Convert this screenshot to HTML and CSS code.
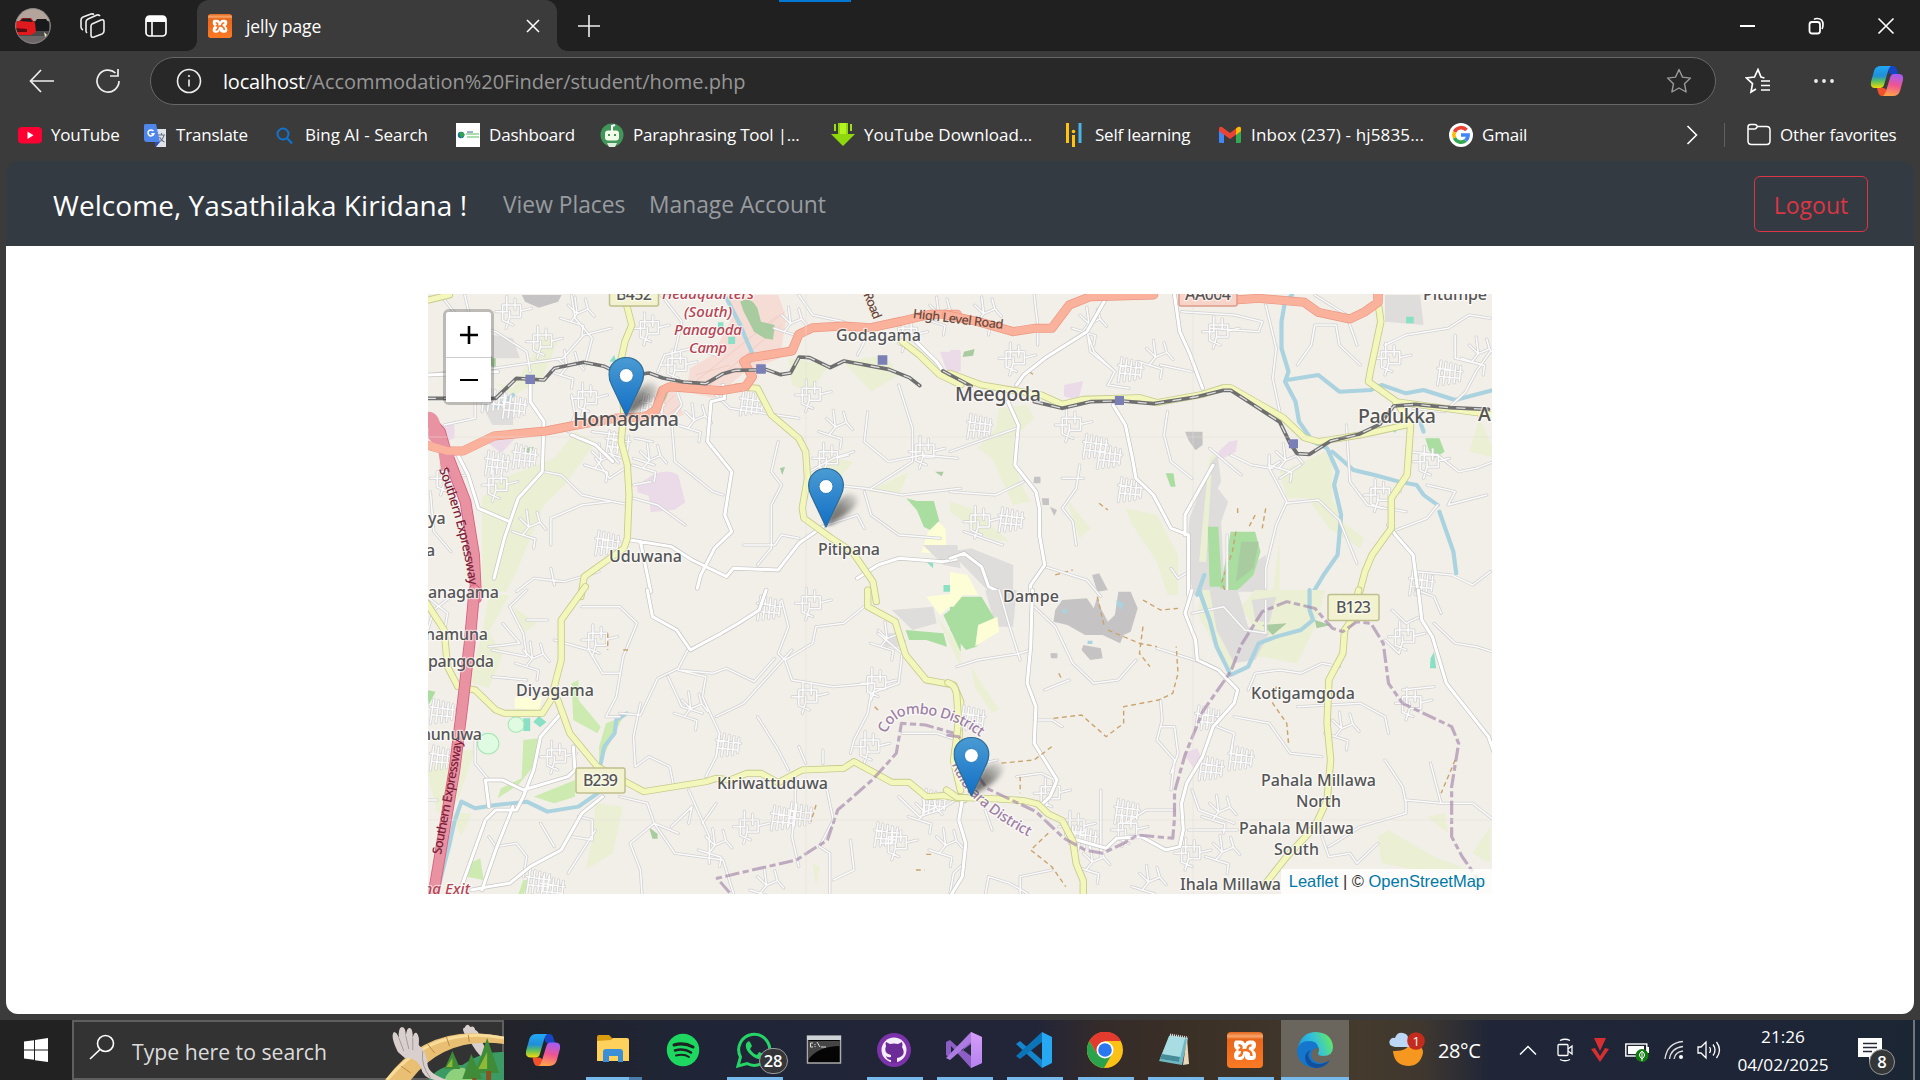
FILE: index.html
```html
<!DOCTYPE html>
<html lang="en">
<head>
<meta charset="utf-8">
<title>jelly page</title>
<link rel="stylesheet" href="styles.css">
</head>
<body>
<svg class="defs" width="0" height="0" aria-hidden="true">
  <defs>
    <linearGradient id="cpA" x1="0" y1="0" x2="0" y2="1"><stop offset="0" stop-color="#22a8f5"/><stop offset=".45" stop-color="#1f8fd8"/><stop offset=".7" stop-color="#5fc05a"/><stop offset="1" stop-color="#f5d90a"/></linearGradient>
    <linearGradient id="cpB" x1=".6" y1="0" x2=".4" y2="1"><stop offset="0" stop-color="#a45cf5"/><stop offset=".5" stop-color="#ef5591"/><stop offset="1" stop-color="#ffa24a"/></linearGradient>
    <linearGradient id="xo" x1="0" y1="0" x2="0" y2="1"><stop offset="0" stop-color="#e2651a"/><stop offset=".12" stop-color="#f9a56a"/><stop offset=".2" stop-color="#e8661a"/><stop offset="1" stop-color="#fb7a24"/></linearGradient>
    <linearGradient id="pinFill" x1="0" y1="0" x2="0" y2="1"><stop offset="0" stop-color="#4a9bd3"/><stop offset="1" stop-color="#126fc6"/></linearGradient>
    <linearGradient id="shade" x1="0" y1="1" x2="1" y2="0"><stop offset="0" stop-opacity=".6"/><stop offset=".5" stop-opacity=".45"/><stop offset="1" stop-opacity=".02"/></linearGradient>
    <linearGradient id="edgeA" x1="0" y1=".6" x2="1" y2=".3"><stop offset="0" stop-color="#1b9de2"/><stop offset=".5" stop-color="#35c1d9"/><stop offset="1" stop-color="#66eb5e"/></linearGradient>
    <linearGradient id="vsA" x1="0" y1="0" x2="0" y2="1"><stop offset="0" stop-color="#d59df8"/><stop offset="1" stop-color="#b583f0"/></linearGradient>
    <symbol id="copilot" viewBox="0 0 34 32">
      <path d="M18 1h5q3 0 4 4l1.500 5h-5q-4 0-5-4z" fill="#1746c4"/>
      <path d="M16 31h-4q-3 0-4-4l-1-4h6q3 0 3.500 3z" fill="#f0502c"/>
      <path d="M11 1h10q-2 1-3 5l-4 14q-1 3-4 3H5q-5 0-4-6L4 6q1.500-5 7-5z" fill="url(#cpA)"/>
      <path d="M23 31H13q2-1 3-5l4-13q1-4 4-4h5q5 0 4 6l-3 11q-1.500 5-7 5z" fill="url(#cpB)"/>
    </symbol>
    <symbol id="xampp" viewBox="0 0 36 36">
      <rect width="36" height="36" rx="4" fill="url(#xo)"/>
      <path d="M9 8.500h5q2.500 0 4 3 1.500-3 4-3h3q4 0 4 4.500 0 3.500-3 5 3 1.500 3 5.500 0 4.500-4 4.500h-3q-4.500 0-4.500-5 0 5-4.500 5h-2q-4 0-4-4.500 0-4 3-5.500-3-1.500-3-5 0-4.500 2-4.500z" fill="#fff"/>
      <path d="M11.500 13.500q3-.500 3 2t-3 2.500M24.500 13.500q-4-.500-4 4M11.500 24q3.500 0 3.500-4 0-2 3-2t4 1q2.500 1 2.500 5" fill="none" stroke="#f07020" stroke-width="2.400"/>
    </symbol>
    <symbol id="pin" viewBox="0 0 62 60">
      <path d="M18 59Q24 34 38 27q9-3 12 4 0 12-32 28z" fill="url(#shade)" filter="url(#soft)"/>
      <path d="M18 1C8 1 .6 8.500 .6 18c0 4 1.200 7.500 3 11l14.400 30.500 14.400-30.500c1.800-3.500 3-7 3-11C35.400 8.500 28 1 18 1z" fill="url(#pinFill)" stroke="#2e6c97" stroke-width="1.200"/>
      <circle cx="18" cy="19" r="7" fill="#fff" stroke="#2e7db8" stroke-width="1"/>
    </symbol>
    <filter id="soft" x="-20%" y="-20%" width="140%" height="140%"><feGaussianBlur stdDeviation="2.500"/></filter>
    <path id="blkA" d="M0 0L70 10M10-22L0 50M24-18L16 48M38-14L32 46M52-10L47 44M66-6L62 38M4 24L60 30"/>
    <path id="blkB" d="M0 0H52V36H20V18M0 0V46L30 60M12-26V20M36-18V14M52 18L84 10M20 36L10 70M-20 20H14"/>
    <path id="blkC" d="M0 0L26 26L8 50L44 62M26 26L58 12L76 34M58 12L50-18M8 50L-22 40M44 62L40 90M26 26L20-24"/>
  </defs>
</svg>

<div class="browser">
  <div class="tabstrip">
    <div class="tabtools">
      <svg class="avatar" viewBox="0 0 36 36"><defs><clipPath id="av"><circle cx="18" cy="18" r="17.500"/></clipPath></defs><g clip-path="url(#av)"><rect width="36" height="36" fill="#4a4a4a"/><rect width="36" height="13" fill="#b3a49c"/><path d="M0 28h36v8H0z" fill="#6b6766"/><path d="M19 15l3-4h9l3 4v8H19z" fill="#17191c"/><path d="M0 14l4-1 3-3h9l4 5 1 9-5 3H0z" fill="#df1a1e"/><path d="M5 13l3-2.500h7l3 3.500z" fill="#1d1e22"/><path d="M0 20l12 1v3H0z" fill="#5a0c10"/><path d="M29 24l3 3-2 2z" fill="#eec"/></g><circle cx="18" cy="18" r="17.400" fill="none" stroke="#8b8785"/></svg>
      <svg class="i26" viewBox="0 0 26 26"><g fill="none" stroke="#eee" stroke-width="1.600" stroke-linejoin="round"><path d="M12 11l9-4q3-1 3 2v9q0 2-2 3l-8 3q-3 1-3-2v-9q0-1 1-2zM7 20q-1-1-1-2V9q0-2 2-3l9-4q2-.6 3 1M3 17q-2-1-2-3V7q0-2 2-3l8-3q2-.500 3 .6"/></g></svg>
      <svg class="i24" viewBox="0 0 24 24"><rect x="2" y="2" width="20" height="20" rx="3.500" fill="none" stroke="#fff" stroke-width="1.700"/><path d="M2 8V5q0-3 3-3h14q3 0 3 3v3z" fill="#fff"/><path d="M8 8v14" stroke="#fff" stroke-width="1.600"/></svg>
    </div>
    <div class="tab">
      <svg class="i24" viewBox="0 0 36 36"><use href="#xampp"/></svg>
      <span class="tabtitle">jelly page</span>
      <svg class="i14" viewBox="0 0 14 14"><path d="M1 1l12 12M13 1L1 13" stroke="#fff" stroke-width="1.500"/></svg>
    </div>
    <svg class="plus" viewBox="0 0 22 22"><path d="M11 0v22M0 11h22" stroke="#eee" stroke-width="1.600"/></svg>
    <div class="progress"></div>
    <div class="winbtns">
      <svg viewBox="0 0 18 18"><path d="M1 9h15" stroke="#fff" stroke-width="2"/></svg>
      <svg viewBox="0 0 18 18"><rect x="1.500" y="5" width="10.500" height="11.500" rx="2.500" fill="none" stroke="#fff" stroke-width="1.800"/><path d="M6 2.500q1-1 3-1 6 0 6 6 0 3-1 4.500" fill="none" stroke="#fff" stroke-width="1.700"/></svg>
      <svg viewBox="0 0 18 18"><path d="M1.500 1.500l15 15M16.500 1.500l-15 15" stroke="#fff" stroke-width="1.600"/></svg>
    </div>
  </div>

  <div class="toolbar">
    <svg class="back" viewBox="0 0 26 24"><path d="M25 12H1.500M12 1L1.500 12 12 23" fill="none" stroke="#eee" stroke-width="1.700"/></svg>
    <svg class="reload" viewBox="0 0 26 26"><path d="M24 13a11 11 0 1 1-3.500-8M23 1v7h-8" fill="none" stroke="#eee" stroke-width="1.700"/></svg>
    <div class="address">
      <svg class="i26" viewBox="0 0 26 26"><circle cx="13" cy="13" r="11.500" fill="none" stroke="#eee" stroke-width="1.600"/><path d="M13 11.500v7" stroke="#eee" stroke-width="1.600"/><circle cx="13" cy="8" r="1.100" fill="#eee"/></svg>
      <span class="url"><b>localhost</b>/Accommodation%20Finder/student/home.php</span>
      <svg class="i26" viewBox="0 0 26 26"><path d="M13 1.500l3.500 7.600 8 1-6 5.600 1.600 8.300L13 20l-7.100 4 1.600-8.300-6-5.600 8-1z" fill="none" stroke="#9a9a9a" stroke-width="1.400" stroke-linejoin="round"/></svg>
    </div>
    <svg class="favs" viewBox="0 0 26 26"><path d="M19.500 10L16 9 13 1.500 9.500 9l-8 1 6 5.600L6 24l5-3M16 13h9M16 17.500h9M16 22h9" fill="none" stroke="#fff" stroke-width="1.700"/></svg>
    <svg class="dots" viewBox="0 0 22 6"><g fill="#eee"><circle cx="3" cy="3" r="1.900"/><circle cx="11" cy="3" r="1.900"/><circle cx="19" cy="3" r="1.900"/></g></svg>
    <svg class="cop" viewBox="0 0 34 32"><use href="#copilot"/></svg>
  </div>

  <div class="bookmarks">
    <div class="bm"><svg viewBox="0 0 24 24"><rect y="4" width="24" height="16.500" rx="4" fill="#ff0033"/><path d="M9.500 8.500v7.500l6-3.700z" fill="#fff"/></svg><span>YouTube</span></div>
    <div class="bm"><svg viewBox="0 0 24 24"><path d="M12 6h11v18H13z" fill="#e0e3e8"/><path d="M2 1h11l4 18H4q-3 0-3-3V2z" fill="#4f86ec"/><path d="M12 19h5l-4 5z" fill="#2a4fbf"/><path d="M10.500 8.200a3 3 0 1 0 .4 2.500H8.300" fill="none" stroke="#fff" stroke-width="1.500"/><path d="M15 12h7M18.500 10v2M21 12q-1 5-5 7M16.500 14q2 4 5 5" fill="none" stroke="#6b7784" stroke-width="1.200"/></svg><span>Translate</span></div>
    <div class="bm wide"><svg viewBox="0 0 24 24"><circle cx="11" cy="11" r="5.500" fill="none" stroke="#1273cf" stroke-width="2"/><path d="M15 15l5 5.500" stroke="#1273cf" stroke-width="2.200"/></svg><span>Bing AI - Search</span></div>
    <div class="bm"><svg viewBox="0 0 24 24"><rect width="24" height="24" fill="#fff"/><circle cx="5" cy="12" r="3.200" fill="#1870a8"/><path d="M3 10q4-3 6 2l-4 3z" fill="#35a448"/><path d="M10 11h13M11 14h12" stroke="#8ed495" stroke-width="1.500"/><path d="M11 9h6" stroke="#46629a"/></svg><span>Dashboard</span></div>
    <div class="bm"><svg viewBox="0 0 24 24"><circle cx="12" cy="12" r="11.500" fill="#41965a"/><path d="M12 8V3l3-1" stroke="#fff" stroke-width="2" fill="none"/><rect x="5" y="7.500" width="14" height="10" rx="3" fill="#f3fbe9"/><path d="M7 20h10l-2 4H9z" fill="#dcebdc"/><path d="M8 11h2v2H8zM14 11h2v2h-2z" fill="#41965a"/></svg><span>Paraphrasing Tool |...</span></div>
    <div class="bm wide"><svg viewBox="0 0 24 24"><path d="M7 0h10v11h7L12 23 0 11h7z" fill="#8fd80e"/><path d="M4 1v7M20 1v7" stroke="#9be01a" stroke-width="2"/><path d="M9 0h6v11H9z" fill="#b4f222"/></svg><span>YouTube Download...</span></div>
    <div class="bm"><svg viewBox="0 0 24 24"><path d="M5.500 0v20M11.500 12v12" stroke="#ffc20e" stroke-width="3"/><circle cx="11.500" cy="8.500" r="1.800" fill="#ffc20e"/><path d="M18 0v20" stroke="#4bb5e8" stroke-width="3"/></svg><span>Self learning</span></div>
    <div class="bm wider"><svg viewBox="0 0 24 24"><path d="M1 6h5v14H2q-1 0-1-1z" fill="#4285f4"/><path d="M18 6h5v13q0 1-1 1h-4z" fill="#34a853"/><path d="M1 6q0-3 3-2l8 6 8-6q3-1 3 2v2l-11 8L1 8z" fill="#ea4335"/><path d="M18 5.500l2-1.500q3-1 3 2v2l-5 4z" fill="#fbbc04"/></svg><span>Inbox (237) - hj5835...</span></div>
    <div class="bm"><svg viewBox="0 0 24 24"><circle cx="12" cy="12" r="12" fill="#fff"/><g fill="none" stroke-width="3.600"><path d="M17.500 7A7.200 7.200 0 0 0 5.500 9" stroke="#ea4335"/><path d="M5.500 9a7 7 0 0 0 0 6" stroke="#fbbc05"/><path d="M5.500 15a7.200 7.200 0 0 0 11 2.500" stroke="#34a853"/><path d="M16.500 17.500q2.500-2 2.600-5.500H12" stroke="#4285f4"/></g></svg><span>Gmail</span></div>
    <svg class="more" viewBox="0 0 12 20"><path d="M1.500 1l9 9-9 9" fill="none" stroke="#fff" stroke-width="1.600"/></svg>
    <div class="bmsep"></div>
    <div class="bm"><svg viewBox="0 0 24 24"><path d="M1 6V4q0-2.500 2.500-2.500H8q1.500 0 2.500 2h9Q23 3.500 23 7v11q0 3.500-3.500 3.500h-15Q1 21.500 1 18V6h7q1 0 2.500-2.500" fill="none" stroke="#fff" stroke-width="1.500"/></svg><span>Other favorites</span></div>
  </div>

  <div class="page">
    <nav class="navbar">
      <span class="brand">Welcome, Yasathilaka Kiridana !</span>
      <a class="navlink vp">View Places</a>
      <a class="navlink ma">Manage Account</a>
      <button class="logout">Logout</button>
    </nav>
    <main class="mapwrap">
      <div class="map">
      <svg class="mapsvg" width="1064" height="600" viewBox="0 0 1064 600">
        <!-- north-west -->
        <g transform="matrix(.3444 0 0 .3333 -8 -9)">
          <g class="farm"><path d="M180 640l60-60 150-60 60-80 60 30-90 130-60 60-80 200-30 60h-70zM20 30h60l-40 20zM210 290l60 20 90-160 40 20-50 120-80 40zM1200 520l60 10-90 100-40-10zM1300 620l120-60-30 70zM1070 220l120 20-60 80-50-20zM1230 230l120-20 40 60-80 50z"/></g>
          <path class="lilac" d="M630 600l50-32q40-18 70 2l20 82-30 22-70 8-6-50-32-10zM186 465l90-5-40 45zM60 420h40v40l-30 10zM1510 200h60v60h-40z"/>
          <path class="mil" d="M850 210l60-120-20-60h150l24 70-20 120-100 40-90 80-80-20 10-70zM670 350l66-40 30 80-60 20z"/>
          <path class="milh" d="M800 290l240-200M830 310l220-190M900 240l-100 30M1000 130l60-50M690 380l50-50M710 400l50-45"/>
          <path class="park" d="M930 50q30-20 50 20l10 40 40 10-5 44-25-4-30-20-30-60z"/><path class="grass" d="M1412 640l30 8 50 0 16 60-25 28-20-10-20-50z"/><path class="sport" d="M1475 740l30-30 20 20 6 80-75-8z"/>
          <path class="grn" d="M200 210l20 10v35l-15-5zM230 170h20v12h-20zM300 490l30-5-5 16-20 5zM1045 550l15-5-8 25zM1495 560l25 0-5 14zM700 320l20 5-10 25z"/>
          <path class="teal" d="M550 230l14-20 6 20zM895 155h20v22h-20zM865 112h16v22h-16zM1470 830h20v20zM1520 900h40v20h-40z"/>
          <path class="gray" d="M210 150l60 10 20 60-80 0zM1460 780h100l10 70-50-10zM180 360h90v60h-60z"/><path class="quarry" d="M296 30h115l-10 20-56 18-40-18z"/>
          <path class="river" d="M890 40l40 80 20 50 15 35M270 330l-45 35"/>
          <g class="sc"><g id="b1" class="none">
            <use href="#blkA" x="180" y="330"/><use href="#blkA" x="240" y="350"/><use href="#blkB" x="330" y="150"/><use href="#blkC" x="400" y="220"/><use href="#blkB" x="200" y="580"/><use href="#blkA" x="190" y="520"/><use href="#blkA" x="270" y="500"/><use href="#blkB" x="240" y="60"/><use href="#blkC" x="430" y="60"/><use href="#blkB" x="460" y="320"/><use href="#blkC" x="500" y="500"/><use href="#blkA" x="510" y="760"/><use href="#blkC" x="640" y="500"/><use href="#blkB" x="640" y="110"/><use href="#blkA" x="930" y="340"/><use href="#blkC" x="1050" y="90"/><use href="#blkB" x="1110" y="310"/><use href="#blkB" x="1160" y="500"/><use href="#blkC" x="1480" y="60"/><use href="#blkB" x="1440" y="480"/><use href="#blkB" x="720" y="220"/><use href="#blkC" x="290" y="700"/><use href="#blkB" x="50" y="560"/><use href="#blkC" x="1180" y="400"/><use href="#blkA" x="640" y="350"/><use href="#blkC" x="770" y="380"/><use href="#blkB" x="1390" y="130"/><use href="#blkA" x="540" y="460"/>
            <path d="M25 270l60-10 130-10 200-30 60-70 80-20M60 30l60 80 100 30 90 60 10 60M130 30l20 90-30 70 90 60M440 30l10 70 50 60-20 80M440 330l10 60-20 50M740 300l20 60-30 40 10 130 50 40 60 50 30 10M1100 30l40 60 90 20 60 60-20 40M360 560l50 10 60 60 40 10 100 20M610 540l-60 40-40-60M620 640l70 20 80 60M860 330l40 40 200 30M1040 470l-20 90 30 40-30 60 0 130-40 50M1200 600l90 10 110 20 170-20M1300 380l-10 90 70 60 100-20 100 10M1390 300l40 130 0 100-120 80M1290 620l20 70 80 60 120 10M1180 720l90-30 20 40M380 780v-80l90-40 80-10M280 920l50-40 90 10 100-30M390 900l-10-50M690 260l20-50 80-20 70 20M940 780l90 0 20-30 50 10M1130 560l70-40 60-20M700 30l60 80-20 90M500 440l80 10M520 400l60 10M530 500l60 20M620 520l60 20M625 460l50 10M620 600l50-10M90 330l70 10 0 60-90 20M30 620l10 120 50 60"/></g></g>
          <use href="#b1" class="sf"/>
          <g class="tc"><path id="t1" d="M25 270l200-10M320 300l0 50 40 60-5 150-70 80-40 120-30 120M110 510l30 60 30 100 90 40M880 300l5 40-40 10-10 120 70 90-20 130 20 50-50 50-40 80-10 40M440 450l70 30 50 50M610 765l120 20 60 40 100 50 20-25 130 5 60-80 70-50M640 770l30 150M1570 820l-50 10-130-10-60 20-60 40M1440 170l60 60 20 30"/></g><use href="#t1" class="tf"/>
          <g class="yc"><path id="y1" d="M600 60l15 60-20 50-15 70 12 140-8 90 18 70 5 90-5 130-10 30-115 85-10 60M920 305l60 5 40 80 80 70 20 40 5 80-15 90 5 30 80 60 60 40 60 90 10 60M1400 170l50 40 60 60 60 30M25 45l60-15"/></g><use href="#y1" class="yf"/>
          <g class="oc"><path id="o1" d="M20 480l60 18h45l90-45 150-15 90-18 110-20 90-5 30-20 20-60 20-10 150 12 70-12 20-30-25-45 20-12 120-20 20-50 40-20 90-5 80 5 90-20 80-20 80 0"/></g><use href="#o1" class="of"/>
          <path class="mc" d="M24 400l34 40 14 50 60 160 25 160 6 130"/>
          <path class="mf" d="M24 400l34 40 14 50 60 160 25 160 6 130"/>
          <path d="M24 380q34 0 38 60l40 70-40 50-10-70-28-30z" fill="#e892a2"/>
          <path class="of" d="M20 480l60 18h45l90-45"/>
          <g class="rail"><path id="r1" d="M20 340h200l60-60 80 5 30-35 85-18 60 12 60 30 70-10 40 15 60 12 65 5 50-30 36-10 90-2 40 15 30-5 25-48 30 2 60 30 40-20 130 25 60 25 30 24"/></g><use href="#r1" class="raild"/>
          <path class="stn" d="M306 269h28v28h-28zM976 238h28v28h-28zM1329 211h28v28h-28z"/>
        </g>
        <!-- north-east -->
        <g transform="matrix(.3508 0 0 .3333 522 -9)">
          <g class="farm"><path d="M140 370l80-10 20 40-60 60 20 130 30 60-50 10-60-140-40-30 50-60zM940 560l130-60 20 30 0 110 30 70 60 50-10 30-90-60-60-90-60 0zM0 650l60 20 110 100-60-10-110-80zM500 670l90 20 60 120v120h-30l-30-100-70-110zM740 520l20-20-10 170-30 160-20 0zM1480 500l30-100 50 120zM330 640l70 90-30 30zM940 760v160h-20z"/></g>
          <path class="gray" d="M745 530l18-20 10 80-10 20 30 40-20 60 10 220-90 0-20-130 10-100zM0 800l60-10 120 50 0 90h-60zM1240 30h100l10 90-110-10zM870 830l30-20v110h-80z"/>
          <path class="farm" d="M735 560l10 10-15 260-20 0z"/>
          <path class="quarry" d="M670 440l50 0v40l-20 16-20-30zM240 575l18 0v20h-20zM262 640l20 0 0 20h-18zM405 870l20-5 25 50-30 5zM285 665l20 10-8 18z"/>
          <path class="lilac" d="M325 300l55-12-15 60-40-15zM765 500l30-30 25-5-5 35-45 25zM0 195l30 0-10 50-20-10z"/>
          <path class="grass" d="M735 725l30 0 10 180-35 0zM800 740l70 0 15 60-20 70-50 50-45-10 15-80zM615 565h22l6 40-14 0zM1355 460l40 0 15 40-30 20-15-25z"/><path class="park" d="M830 770l50 0-15 80-50 40z"/>
          <path class="sport" d="M0 860l50 10 30 60H0z"/><path class="grn" d="M40 200l30-8-4 20-30 4z"/><path class="teal" d="M1300 95h22v20h-22zM1240 425l35 0-5 18z"/>
          <path class="track" d="M815 740l-10 60-30 90 10 30M870 690l-20 40M425 655l25 20M300 870l50-15M225 260l15 10M900 670l-10 60M820 670v20"/>
          <path class="river" d="M975 30l-20 20-10 60v80l20 70-10 30 30 60 10 60 40 60 40 20 30 70-10 40 20 90-10 120-40 60-40 70v60M960 285l90-15 60 50 90-5 30-15 70 25 50-10 90 30 110-30M1090 500l60 55 60 15 70 20 50 10 20 30 40 30M1395 680l20 60 20 60 8 65M725 870l-20 60M1330 380l20 60"/>
          <g class="sc"><g id="b2" class="none">
            <use href="#blkA" x="480" y="240"/><use href="#blkC" x="560" y="190"/><use href="#blkB" x="740" y="120"/><use href="#blkB" x="320" y="400"/><use href="#blkA" x="380" y="470"/><use href="#blkA" x="420" y="500"/><use href="#blkC" x="70" y="60"/><use href="#blkB" x="160" y="200"/><use href="#blkA" x="480" y="600"/><use href="#blkA" x="140" y="690"/><use href="#blkB" x="60" y="690"/><use href="#blkB" x="1230" y="200"/><use href="#blkA" x="1390" y="250"/><use href="#blkB" x="1340" y="510"/><use href="#blkC" x="1480" y="180"/><use href="#blkB" x="1200" y="610"/><use href="#blkA" x="1310" y="880"/><use href="#blkC" x="930" y="500"/><use href="#blkC" x="370" y="90"/><use href="#blkA" x="50" y="410"/>
            <path d="M240 30l10 90 0 60M390 140l20 60 60 60-20 40 60 10M660 80l150 10 80 20-10 30-140-10M600 240l90 20M620 380l-10 70 20 80 60 50M800 510l60 30 60 10M910 550l50 100-30 70-30 130v60M910 510v40l30-20M990 240l40-60 10-60 60 0 10 60 60 60M900 60l30 130-10 90 20 100M1040 30l90 60 30 90M960 655l90-10 60 60 50 130M1130 420l10 170 50 70 50 10 60 10M1240 180l60-30 120-20 60-40 60 10M1320 370l90 10 60-60 30-60 40-60M1310 500l80 10 60 50 50-10 50-20M1360 600l80 20-20 40 110-30M1260 740l100-40 30-40M1330 860l100 10 60 30 50-40M0 500l80-30 110-40M0 620l130 10 80-40M40 740l110 40M270 845l60 20 60 20 40 50M360 780l-10-70-30-40 40-60 10-70M320 580h60M790 750v170M630 850l20 30 30-20M740 490l90 80M1000 540l-60 40M390 130l10 70 70 60M1440 150v70l80 20"/></g></g>
          <use href="#b2" class="sf"/>
          <g class="tc"><path id="t2" d="M450 30l-60 110-120 80-60 50-20 30M165 350l30 70-10 120 60 80 10 50 0 80 15 90-40 60v20M465 360l35 60 20 100 10 60 50 50 50 100 50 20 0 180M640 30l15 110 30 70 35 100M750 540l-80 150 0 60M0 820l40-15 50 40 20 60 40 20M1250 720l20 30 50 60 15 120"/></g><use href="#t2" class="tf"/>
          <g class="yc"><path id="y2" d="M0 265l90 35 170 30 60 28 60-15 160-5 50 15 130-25 60-20h20l150 90 60 60 40 12 120-20 130-30M1220 50l8 60-30 150-5 30 80 60 40 70-10 150-45 70 0 90-55 80-20 50-15 60M1270 350l280 40"/></g><use href="#y2" class="yf"/>
          <g class="oc"><path id="o2" d="M-10 90l90 20 100 30 60-10 50 0 50-70 60-25 180-5M810 45l70-5 130 12 40 30 90 20 40-20 40-30 0-30"/></g><use href="#o2" class="of"/>
          <g class="rail"><path id="r2" d="M-20 258l80 45M240 350l80 20 80-20 90-2 90 8 120-20 80-20h20l60 40 80 55 30 65 20 30 35 2 60-40 80-20 60-30 40-55 60-5 100 10 110 5"/></g><use href="#r2" class="raild"/>
          <path class="stn" d="M470 333h26v27h-26zM966 463h26v27h-26z"/>
        </g>
        <!-- south-west -->
        <g transform="matrix(.3444 0 0 .3333 -8 296)">
          <g class="farm"><path d="M200 15h60l-60 110 40 70-40 100-60-20 40-140zM270 50l70 50-40 30zM510 640l80 10-30 140-80 50 20-90zM20 540l90-60 50 0-50 150-60 40zM90 670h60l-30 70zM1140 820l20 10-10 60zM1500 80l70 90 0 60z"/></g>
          <path class="grassl" d="M440 280l20-10 0 60 65 80-10 20-70-40zM300 450l45-5-20 90-40 50-60 40 10-30 60-30zM330 620l120-50 0 50-60 20zM540 400l50-20-40 80-30 70 0-60zM145 820l30-15 10 65-50-10zM300 870l20 0-20 45h-15z"/>
          <path class="sport" d="M275 322l80 0-10 38-70-5zM1470 20l90-10v20l-50 45z"/><path class="grass" d="M1520 75l50-40v150zM1410 120l110 10 10 40-60-20-50 0zM20 300l25 5-20 40z"/>
          <path class="grn" d="M665 712l25 20v14h-15z"/><path class="teal" d="M300 385h20v38h-20zM345 378l22 18-18 16-20-16z"/>
          <path class="gray" d="M1370 60l120-10 10 50-70 20M1350 130l40 0 10 40-50 0z"/>
          <circle cx="279" cy="404" r="23" class="pond"/><circle cx="198" cy="461" r="31" class="pond"/>
          <path class="river" d="M600 370l-30 20-5 40-30 40-10 50-25 40M530 600l-70 50-90 15-60-30-90 10-60 10-40-20-20 60-15 70-30 120"/>
          <g class="sc"><g id="b3" class="none">
            <use href="#blkB" x="490" y="130"/><use href="#blkC" x="300" y="180"/><use href="#blkA" x="860" y="450"/><use href="#blkC" x="760" y="330"/><use href="#blkB" x="1100" y="300"/><use href="#blkA" x="980" y="40"/><use href="#blkB" x="1110" y="20"/><use href="#blkA" x="1020" y="670"/><use href="#blkA" x="1070" y="660"/><use href="#blkB" x="930" y="690"/><use href="#blkC" x="830" y="740"/><use href="#blkA" x="1320" y="720"/><use href="#blkB" x="1360" y="740"/><use href="#blkC" x="1440" y="640"/><use href="#blkB" x="1300" y="260"/><use href="#blkC" x="1500" y="740"/><use href="#blkA" x="310" y="860"/><use href="#blkA" x="350" y="880"/><use href="#blkB" x="370" y="480"/><use href="#blkA" x="30" y="490"/><use href="#blkB" x="1280" y="450"/><use href="#blkA" x="1460" y="620"/><use href="#blkA" x="30" y="350"/><use href="#blkC" x="1330" y="120"/><use href="#blkC" x="980" y="860"/>
            <path d="M310 0l-50 50 40 80 10 70-100-20M310 90l60 0M390 150l100 30 40 70 50 0M470 50l110 0 50 50-40 100-20 120-30 60 40 0M580 370l60 5 50-110 60-30 30-60M720 260l40 90 60 20M750 240l80 20-10 60 50 110-10 70-30 60M860 380l80-40 140-160M750 240l100 10 40-15 80 40 60-70M640 340l-20 100 5 90 40-30 60 30 10 50M580 620l80 20 20 60-70 60 30 80 5 80M680 700l70 30M680 700l60 90 140 20 30 100M780 600l60 140v80M780 700l10-50-60 60M1050 30l20 80-30 80 20 20 80-50 10-50 80-10 60-50M1060 210l20 60 120 20 120-10M1330 130l70 60-10 90-80 30-10 60-40 80-10 40M980 380l60 100 30 60M1170 480v40M1100 470l20 50M1180 590l20 100-40 80 30 20 0 120M1250 750l10 90-60 30M1570 620l-60 40-60 20-60-60M1090 560v90l-10 90 20 90M860 640l-40 60M20 630l30 0M160 450l0 70 40 50M20 130l20-70 50-40M240 100l50 60-90 10M460 680l40 10v60l-60-10M20 20l60 50-10 60M200 740l20 30 60-10 30 40-10 60M350 700l40 70M1400 430l100 0 60 20M210 260l100 10M430 850l80-130"/></g></g>
          <use href="#b3" class="sf"/>
          <g class="tc"><path id="t3" d="M660 0l15 80 70 40 40 60 90-50 50-30 60-40 20-60M410 370l-60 70-20 100-30 80-20 40-60 0-30 30-80 230M190 570l50 0 60 30 130-40 20-20-5-70M190 570l10 80M270 650l-50 130-40 120M530 620l-60 50-60 110-90 50-60 50-60 10-50 10"/></g><use href="#t3" class="tf"/>
          <g class="yc"><path id="y3" d="M20 40l50 80 10 110 30 60 50 10 60 60 25 10h110l25-40 30-120 0-120 70-100M400 330l35 100 80 100 90 50 45 25 180-30 30-10 40 5 50-20 40 0 50 28 70-38 120-5 30-20 110 62 50 0 50 43 50-3 60 12M1300 0v50l80 45 30 100 60 75 80 15 20 50 -5 110"/></g><use href="#y3" class="yf"/>
          <path class="mc" d="M158 0l-14 160-20 180-24 200-36 220-26 160"/><path class="mf" d="M158 0l-14 160-20 180-24 200-36 220-26 160"/>
          <path class="bound" d="M1568 435l-100-30-70-5-15 90-70 80-100 90-30 90-90 60-170 40-60 15 50 60"/>
          <path class="track" d="M545 130v50M590 180h20M1150 645l-15 50M1320 350l10 10M1440 840h25M1470 793h20"/>
        </g>
        <!-- south-east -->
        <g transform="matrix(.3508 0 0 .3333 522 296)">
          <g class="farm"><path d="M720 0h25l70 230-20 20-40-80-50-100zM830 50l40-50h200l-30 110-50 110-100-20-60 0 40-80zM60 230l30 50 50 80-20 10-50-80zM1220 740l30-20 130 80 150 60v20l-300-60zM1360 680l50-10 10 60zM1490 790l50-80v110z"/></g>
          <path class="gray" d="M740 0h80l30 110 60 20-40 80-60 10-50-100zM100 0l90 0-10 110-50 0zM860 30l70-10-20 80-40-10z"/>
          <path class="quarry" d="M300 60l20-30 70-5 20 30 10-35 10 35 20 40 20-20 10-70 35 0 20 50-20 70-20 10-10 25-50-25-50 0-50-30-40-10zM380 165l50 10 5 30-35 5-25-30zM286 190l20 0v15h-18z"/>
          <path class="grass" d="M0 20h90l45 80-60 70-30 10-45-60z"/><path class="sport" d="M80 105l55-25 5 45-68 44zM0 0h50L10 50H0z"/><path class="park" d="M890 105l70-5-40 35zM1040 90l45 15-40 10z"/>
          <path class="teal" d="M1370 205l10-20 6 50h-18z"/><path class="lilac" d="M665 490l40-15 20 50-30 10z"/><path class="pondb" d="M475 30l20 10-5 20-15-15zM320 58h14v12h-14zM392 152h14v10h-14z"/>
          <g class="sc"><g id="b4" class="none">
            <use href="#blkA" x="700" y="370"/><use href="#blkA" x="710" y="520"/><use href="#blkA" x="795" y="490"/><use href="#blkA" x="470" y="650"/><use href="#blkB" x="480" y="700"/><use href="#blkC" x="380" y="790"/><use href="#blkB" x="660" y="770"/><use href="#blkC" x="750" y="760"/><use href="#blkB" x="330" y="690"/><use href="#blkC" x="1090" y="390"/><use href="#blkB" x="1290" y="320"/><use href="#blkB" x="260" y="590"/><use href="#blkA" x="30" y="370"/><use href="#blkB" x="50" y="500"/><use href="#blkC" x="540" y="850"/><use href="#blkA" x="350" y="730"/><use href="#blkB" x="1270" y="120"/><use href="#blkC" x="740" y="640"/>
            <path d="M240 50l60 60 50 110 60 60 70-10 50-60M20 230l60-20 120-20 30-10M140 0l30 110 30 100M240 390l50 0 30 20M270 300l70-30M850 300l20-50 70-10 60 10 60-30 50 10M810 380l100 20 60 90 90 10M990 350l180-10 70 40 10 50M600 330l5 60-15 60 50 60-10 90M600 410h40l10 80-20 60M760 410l50 20-10 60M680 720l140 0M690 600l20 60 100 40M640 660l-80 0-60 40M200 920l0-60 90-20M1300 640l0 30-130 40-90 60M1300 630l100 10 90 0 60 50M1370 520l30 120M1240 510l50 80 10 50M1340 80l-40 20-40-40M1380 100l60 60 60 10 60 20M1380 290l-90 10M1060 740l20 60 60-10 20 30 60-60M100 920l10-60 60 20 50 30M1330 0l50 20 20 50M690 70l90-20 60 70 60 10V30M120 720l-20-60M590 175l60 20 60 20M190 560l70-10 40 20M430 600v200M0 910l10-60 30-30M1240 150l40 40"/></g></g>
          <use href="#b4" class="sf"/>
          <g class="tc"><path id="t4" d="M235 0l-5 170-10 110 25 70-5 110 65 110-20 50-20 20M690 0l-20 70 30 80 5 60 60 30 55 60-10 40-60 70-30 90-45 80-15 60 5 80-10 50-40 10-70-40-70 5-30 30-100-30M35 630l-10 60 20 70-10 100-35 60M1335 0l10 90 30 50 40 140 60 80 60 80 20 60"/></g><use href="#t4" class="tf"/>
          <path class="river" d="M710 0l30 90 20 80 40 85 50-25 30-70 50-20 70-20 35-30-10-30v-60"/>
          <path class="track" d="M295 385l80-10 70 65 50-40 0-50 100-20 40-20 15-60-5-80M450 120l90 40 50 10M420 20l20 90M550 30l50 30 50-5M550 110l-10 80 30 40M310 250l10 20M290 470l-50 40-100 10M200 560v50M280 730l-50 50 60 50 40 60M930 290l-10 50 40 60 5 60M1440 510l-40 100"/>
          <g class="yc"><path id="y4" d="M-6 278q20 6 25 34l5 80-6 60-8 60 20 90M-10 600l30 22 120 5 70 5 40 10 30 30 40 20 30 60 10 70 20 50v60M1165 0l-20 90-20 30-5 70-40 80-5 130 10 110-10 120-35 80-80 90-60 80"/></g><use href="#y4" class="yf"/>
          <path class="bound" d="M-10 435l35 5 50 110 30 45 140 70 80 80 60 35 50 10 60-30 40-25 100 10 5-60 0-80 30-110 50-130 80-120 30-80 60-100 70-30 80 20 50 60 30 10 40-30 40 5 35 60 15 120 40 60 140 70 20 50-20 130v150l30 60 60 90"/>
        </g>
        <g class="tiles"><path d="M378 0v600M765 0v600M0 143h1064M0 526h1064" fill="none"/></g>
        <!-- road shields -->
        <g><rect x="181.500" y="-14" width="49" height="26" rx="2" class="shield"/><rect x="148" y="474" width="49" height="25" rx="2" class="shield"/><rect x="900" y="300.500" width="51" height="26" rx="2" class="shield"/><rect x="751" y="-14" width="58" height="26" rx="2" fill="#f8d3c8" stroke="#dd9c8c" stroke-width="1.500"/></g>
        <g class="lb">
          <text x="188" y="6" textLength="36">B452</text><text x="155" y="492" textLength="35" fill="#4d4f2e">B239</text><text x="908" y="319" textLength="35" fill="#4d4f2e">B123</text><text x="757" y="6" textLength="46" fill="#6b3a3a">AA004</text>
          <g class="big"><text x="145" y="132" textLength="106">Homagama</text><text x="527" y="107" textLength="86">Meegoda</text><text x="930" y="129" textLength="78">Padukka</text><text x="1050" y="127">Arukwatta</text></g>
          <text x="408" y="47" textLength="85">Godagama</text><text x="181" y="268" textLength="73">Uduwana</text><text x="390" y="261" textLength="62">Pitipana</text><text x="575" y="308" textLength="56">Dampe</text><text x="88" y="402" textLength="78">Diyagama</text><text x="289" y="495" textLength="111">Kiriwattuduwa</text><text x="823" y="405" textLength="104">Kotigamgoda</text>
          <text x="833" y="492" textLength="115">Pahala Millawa</text><text x="868" y="513" textLength="45">North</text><text x="811" y="540" textLength="115">Pahala Millawa</text><text x="846" y="561" textLength="45">South</text><text x="752" y="596" textLength="101">Ihala Millawa</text><text x="995" y="6" textLength="64">Pitumpe</text>
          <text x="0" y="230">ya</text><text x="-2" y="262">a</text><text x="0" y="304" textLength="71">anagama</text><text x="-3" y="346" textLength="63">namuna</text><text x="0" y="373" textLength="66">pangoda</text><text x="-7" y="446" textLength="61">hunuwa</text>
          <g class="red"><text x="234" y="5" textLength="92">Headquarters</text><text x="256" y="23" textLength="48">(South)</text><text x="246" y="41" textLength="68">Panagoda</text><text x="261" y="59" textLength="38">Camp</text><text x="-9" y="600" textLength="51">ma Exit</text></g>
          <g class="rd"><text transform="translate(485 20) rotate(7)" x="0" y="4" textLength="91">High Level Road</text><text transform="translate(436 2) rotate(68)" textLength="28" x="-2" y="0">Road</text></g>
          <path id="se1" d="M11 175Q36 245 41 292" fill="none"/><path id="se2" d="M13 561Q25 500 34 448" fill="none"/>
          <text class="exp"><textPath href="#se1" textLength="120">Southern Expressway</textPath></text><text class="exp"><textPath href="#se2" textLength="117">Southern Expressway</textPath></text>
          <path id="co1" d="M458 440Q468 415 500 421 530 425 556 446" fill="none"/><path id="co2" d="M524 470Q535 508 601 543" fill="none"/>
          <text class="dist"><textPath href="#co1" textLength="108">Colombo District</textPath></text><text class="dist"><textPath href="#co2" textLength="108">Kalutara District</textPath></text>
        </g>
        <use href="#pin" x="180.300" y="62.500" width="62" height="60"/><use href="#pin" x="380" y="173.500" width="62" height="60"/><use href="#pin" x="525.400" y="442.500" width="62" height="60"/>
      </svg>
      <div class="zoomctl"><a><svg viewBox="0 0 18 18"><path d="M0 9h18M9 0v18" stroke="#000" stroke-width="2.600"/></svg></a><a><svg viewBox="0 0 18 18"><path d="M0 9h18" stroke="#000" stroke-width="2"/></svg></a></div>
      <div class="attrib"><a>Leaflet</a> | © <a>OpenStreetMap</a></div>
      </div>
    </main>
  </div>
</div>

<div class="taskbar">
  <div class="start"><svg viewBox="0 0 24 24"><path d="M0 3.500l10-1.300v9.200H0zM11 2L24 0v11.400H11zM0 12.500h10v9.200L0 20.500zM11 12.500h13V24l-13-1.800z" fill="#fff"/></svg></div>
  <div class="search">
    <svg class="mag" viewBox="0 0 26 26"><circle cx="16.500" cy="9.500" r="8" fill="none" stroke="#fff" stroke-width="1.600"/><path d="M11 15.500L1 25" stroke="#fff" stroke-width="1.700"/></svg>
    <span>Type here to search</span>
    <svg class="art" viewBox="0 0 120 56" preserveAspectRatio="none">
      <path d="M44 56q10-16 34-15 18-14 42-13v28z" fill="#3c9a64"/><path d="M60 56q5-14 20-12l10 12z" fill="#8fd07d"/>
      <path d="M84 16q-8-12-4-12 3-6 6-1 4-2 5 3 3 1 4 5l4 9q6 10 5 15-6 0-12-8l-6-9z" fill="#d9cfcd"/>
      <path d="M0 56Q45-4 120 13v7Q60 12 26 56z" fill="#e9bf74"/><path d="M2 56Q48 0 120 14" stroke="#f8dc9a" stroke-width="3" fill="none"/><path d="M16 42l10 7M28 30l9 9M43 20l7 9M62 13l3 9M84 11l1 7" stroke="#bd8b41"/>
      <path d="M13 28Q5 12 9 8q3 0 5 6-1-10 3-11 4 0 4 9 1-9 4-8 3 0 3 10 1-6 4-5 3 3 2 12 8 6 9 20 1 9 20 15H50Q38 54 36 43 31 33 20 34z" fill="#d9cfcc"/><path d="M14 14l5 13M21 12l3 13M28 14v12M38 27q-2 15 8 27" stroke="#a39a9d" fill="none"/>
      <path d="M68 27l8 18H60zM87 30l11 25H78zM103 14l12 35H91z" fill="#3f8b37"/><path d="M68 34l-6 9h6zM103 28l-9 17h9z" fill="#8cba36"/><path d="M88 54h4v3h-4zM102 47h5v9h-5z" fill="#885321"/>
    </svg>
  </div>
  <div class="apps">
    <div class="app"><svg viewBox="0 0 34 32"><use href="#copilot"/></svg></div>
    <div class="app run exp2"><svg viewBox="0 0 36 36"><path d="M2 5q0-2 2-2h10l4 4-4 4H2z" fill="#d99c0e"/><path d="M2 9l14-1 2-2h14q2 0 2 2v21H2z" fill="#fdd15b"/><path d="M8 30V20q0-3 3-3h14q3 0 3 3v10h-5v-6h-9v6z" fill="#3a8fd6"/></svg></div>
    <div class="app"><svg viewBox="0 0 36 36"><circle cx="18" cy="18" r="16.200" fill="#1ed760"/><g fill="none" stroke="#1b2420" stroke-linecap="round"><path d="M9 13q10-3 19 2" stroke-width="3"/><path d="M10 18.500q9-2.500 16 2" stroke-width="2.500"/><path d="M11 23.500q8-2 13 1.500" stroke-width="2"/></g></svg></div>
    <div class="app run"><svg viewBox="0 0 36 36"><path d="M2 34l2.500-9A15.500 15.500 0 1 1 11 31.500z" fill="none" stroke="#25d366" stroke-width="3"/><path d="M10 12q2-4 4-2l2 4-2 3q3 5 7 6l2-3 5 2q1 3-3 5-5 1-11-5-5-5-4-10z" fill="#25d366"/></svg><i class="badge">28</i></div>
    <div class="app"><svg viewBox="0 0 36 36"><rect x="1.500" y="4" width="33" height="27" fill="#050505" stroke="#aaa" stroke-width="1.500"/><path d="M1 4h34v4H1z" fill="#ced3d8"/><path d="M2 9h32v5Q12 14 2 28z" fill="#454545"/><path d="M7 11H4.500v4H7M9 12v1M9 14v1M11 10l3 5M15 15h5" stroke="#ddd" fill="none"/></svg></div>
    <div class="app run"><svg viewBox="0 0 36 36"><circle cx="18" cy="18" r="17" fill="#7c32a8"/><circle cx="18" cy="18" r="12.500" fill="#f4eef8"/><path d="M10 10l4 2q4-1 8 0l4-2q1 3 0 5 5 9-5 11v5h-6v-3q-4 0-5-4 2 2 5 1v-2q-8-2-5-9-1-2 0-4z" fill="#6c2c98"/></svg></div>
    <div class="app run"><svg viewBox="0 0 36 36"><path d="M0 10l4-2 12 11L25 5V0l11 5v26l-11 5-20-22v10l-2 1-3-2z" fill="#8d5fc4"/><path d="M0 26L25 0v10L4 28z" fill="#ad7ce3"/><path d="M25 0l11 5v26l-11 5z" fill="url(#vsA)"/><path d="M25 12v12l-8-6z" fill="#252a3e"/></svg></div>
    <div class="app run"><svg viewBox="0 0 36 36"><path d="M0 12l4-3 22 19v8z" fill="#1585ce"/><path d="M0 24L26 0v10L4 27z" fill="#0c74b9"/><path d="M26 0l10 5v26l-10 5z" fill="#27a8f2"/></svg></div>
    <div class="app run"><svg viewBox="0 0 36 36"><circle cx="18" cy="18" r="18" fill="#fbc116"/><path d="M2.400 9A18 18 0 0 1 34 9H18l-8 13z" fill="#e33b2e"/><path d="M2.400 9A18 18 0 0 0 17 36l8-14H10z" fill="#2ba24c"/><circle cx="18" cy="18" r="8.500" fill="#fff"/><circle cx="18" cy="18" r="6.800" fill="#2a78f0"/></svg></div>
    <div class="app run"><svg viewBox="0 0 36 36"><path d="M13 3l18 3-6 27-23-4z" fill="#6fb8c4"/><path d="M12 4l16 2-6 24-19-3z" fill="#a8dde4"/><path d="M30 6l2 26-6 1z" fill="#ead8b8"/><path d="M5 22l18 3-1 5-19-3z" fill="#438c98"/><path d="M13 3l18 3" stroke="#ddd" stroke-width="3" stroke-dasharray="1 1"/></svg></div>
    <div class="app run"><svg viewBox="0 0 36 36"><use href="#xampp"/></svg></div>
    <div class="app run active"><svg viewBox="0 0 36 36"><path d="M1 15Q5 0 19 0q16 1 17 15 0 9-10 9-5 0-5-3 3-5-2-8-10-4-18 2z" fill="url(#edgeA)"/><path d="M0 18Q2 9 12 9q9 0 9 7-6 0-7 6 0 8 9 9 5 1 10-3-5 8-14 8Q1 35 0 18z" fill="#1476cc"/><path d="M14 18q-6 5 1 12 8 5 18-2-5 8-14 8-10-1-11-10 0-6 6-8z" fill="#10509c"/></svg></div>
  </div>
  <div class="tray">
    <div class="weather"><svg viewBox="0 0 36 34"><path d="M4 19q14 1 20-10 11 6 10 12-3 13-15 13Q5 33 4 19z" fill="#f6981f"/><path d="M3 14q-4-2-2-6 2-3 5-2 2-6 8-5 5 1 5 5 5 1 4 7-1 2-3 2H6z" fill="#bcd6f6"/><circle cx="27" cy="9" r="8.800" fill="#c42b1c"/><text x="27" y="14" text-anchor="middle" font-size="13" fill="#fff">1</text></svg><span>28°C</span></div>
    <svg class="t1" viewBox="0 0 18 10"><path d="M1 9.500L9 1.500l8 8" fill="none" stroke="#fff" stroke-width="1.500"/></svg>
    <svg class="t2" viewBox="0 0 16 24"><g fill="none" stroke="#fff" stroke-width="1.300"><rect x="1" y="6.500" width="10" height="11" rx="1"/><path d="M11 11l4-3v8l-4-3M3 2.500q5-2.500 10 0M3 21.500q5 2.500 10 0"/></g></svg>
    <svg class="t3" viewBox="0 0 18 24"><path d="M3 0h12L9 13zM0 11l4-1 5 8 5-8 4 1-9 13z" fill="#d62f32"/></svg>
    <svg class="t4" viewBox="0 0 24 24"><rect x=".8" y="6" width="21" height="12" fill="none" stroke="#fff" stroke-width="1.400"/><path d="M3 8h16v8H3zM22 9h2v6h-2z" fill="#fff"/><circle cx="17" cy="17.500" r="6.500" fill="#107c10"/><path d="M17 13q5 4 0 8-5-4 0-8v10" fill="none" stroke="#fff"/></svg>
    <svg class="t5" viewBox="0 0 20 20"><g fill="none" stroke="#ddd" stroke-width="1.300"><path d="M1 19Q3 3 19 1.500M5.500 19Q7 8 19 6.500M10 19q1-7 9-8"/></g><circle cx="17" cy="17" r="2" fill="#fff"/></svg>
    <svg class="t6" viewBox="0 0 24 20"><g fill="none" stroke="#fff" stroke-width="1.300"><path d="M1 7h3l5-5v16l-5-5H1zM12.500 7q2 3 0 6M16 4.500q4 5.500 0 11M19.500 2q6 8 0 16"/></g></svg>
    <div class="clock"><span>21:26</span><span>04/02/2025</span></div>
    <div class="notif"><svg viewBox="0 0 24 26"><path d="M0 0h24v19h-8l-5 6v-6H0z" fill="#fff"/><path d="M5 5.500h14M5 9.500h14M5 13.500h9" stroke="#252b35" stroke-width="1.300"/></svg><i class="badge">8</i></div>
    <div class="show"></div>
  </div>
</div>
</body>
</html>
```
FILE: styles.css
```css
*{box-sizing:border-box}
body{margin:0;width:1920px;height:1080px;overflow:hidden;background:#3b3b3b;font-family:"Open Sans","Noto Sans",sans-serif;color:#fff;display:flex;flex-direction:column}
svg{display:block;flex:none}
.defs{position:absolute}
.browser{height:1020px;display:flex;flex-direction:column}
.tabstrip{height:51px;flex:none;background:#202020;display:flex;align-items:center;position:relative}
.tabtools{width:197px;padding-left:15px;display:flex;align-items:center}
.avatar{width:36px;height:36px;margin-right:29px}
.i26{width:26px;height:26px}
.i24{width:24px;height:24px}
.i14{width:14px;height:14px}
.tabtools .i24{margin-left:38px}
.tab{width:360px;height:51px;background:#3b3b3b;border-radius:12px 12px 0 0;display:flex;align-items:center;padding:0 17px 0 11px;position:relative}
.tab::before,.tab::after{content:"";position:absolute;bottom:0;width:10px;height:10px}
.tab::before{left:-10px;background:radial-gradient(circle at 0 0,#202020 9.5px,#3b3b3b 10px)}
.tab::after{right:-10px;background:radial-gradient(circle at 100% 0,#202020 9.5px,#3b3b3b 10px)}
.tabtitle{margin-left:14px;flex:1;font-size:17.5px;letter-spacing:-.1px}
.plus{width:22px;height:22px;margin-left:21px}
.progress{position:absolute;left:779px;top:0;width:72px;height:2px;background:#0078d4}
.winbtns{margin-left:auto;display:flex;gap:51px;padding-right:25px}
.winbtns svg{width:18px;height:18px}
.toolbar{height:60px;flex:none;display:flex;align-items:center;padding:0 16px 0 29px}
.back{width:26px;height:24px}
.reload{width:26px;height:26px;margin:0 29px 0 40px}
.address{width:1566px;height:48px;border:1.5px solid #676767;border-radius:24px;background:#282828;display:flex;align-items:center;padding:0 23px 0 25px}
.url{flex:1;margin-left:21px;font-size:20px;color:#969696;letter-spacing:-.02px}
.url b{font-weight:400;color:#fff;letter-spacing:-.2px}
.favs{width:26px;height:26px;margin-left:29px}
.dots{width:22px;height:6px;margin-left:42px}
.cop{width:34px;height:32px;margin-left:auto}
.bookmarks{height:50px;flex:none;display:grid;grid-template-columns:125px 129px 184px 144px 231px 231px 156px 231px 237px 38px 23px 1fr;align-items:center;padding:0 0 3px 18px}
.bm{display:flex;align-items:center;gap:9px;font-size:17px;letter-spacing:-.2px;white-space:nowrap}
.bm.wide{letter-spacing:0;}
.bm.wider{letter-spacing:.15px}
.bm svg{width:24px;height:24px}
.bm span{margin-top:-1px}
.more{width:12px;height:20px}
.bmsep{width:1px;height:24px;background:#606060}
.page{height:853px;margin:0 6px;border-radius:12px;overflow:hidden;display:flex;flex-direction:column}
.navbar{height:85px;background:#343a42;display:flex;align-items:center;padding:0 46px 0 47px}
.brand{font-size:28px;width:450px;letter-spacing:.06px;white-space:nowrap;padding-top:2px}
.navlink{font-size:22.8px;color:#999c9f;padding-top:2px}
.vp{width:146px}
.logout{margin-left:auto;width:114px;height:56px;border:1.5px solid #dc3545;border-radius:6px;background:none;color:#dc3545;font:23px "Open Sans",sans-serif;padding:2px 0 0}
.mapwrap{flex:1;background:#fff;display:flex;justify-content:center;padding-top:48px}
.map{width:1064px;height:600px;position:relative;background:#f2efe9;overflow:hidden}
.farm{fill:#ebefd4}
.lilac{fill:#ebdbe8}
.mil{fill:#f5ddd6}
.milh{fill:none;stroke:#efc3bb;stroke-width:2}
.park,.grn{fill:#a9cba0}
.grass{fill:#a9dea0}
.grassl{fill:#cdebb0}
.sport{fill:#fdfdd6}
.teal{fill:#8ae0c4}
.gray{fill:#dedddc}
.quarry{fill:#c5c3c3}
.pond{fill:#dffbe2;stroke:#a4e5b3;stroke-width:3}
.pondb{fill:#aad3df}
.river,.sc,.sf,.tc,.tf,.yc,.yf,.oc,.of,.mc,.mf,.rail,.raild,.bound,.track{fill:none;stroke-linejoin:round;stroke-linecap:round}
.river{stroke:#aad3df;stroke-width:12}
.sc{stroke:#d2d1d1;stroke-width:9}
.sf{stroke:#fbfbfb;stroke-width:4.5}
.tc{stroke:#c6c5c4;stroke-width:13}
.tf{stroke:#fff;stroke-width:9}
.yc{stroke:#c6cb8c;stroke-width:21}
.yf{stroke:#f4f7bb;stroke-width:16}
.oc{stroke:#ec9680;stroke-width:27}
.of{stroke:#fab29c;stroke-width:23}
.mc{stroke:#d7607f;stroke-width:34}
.mf{stroke:#e892a2;stroke-width:29}
.rail{stroke:#6f6f6f;stroke-width:11}
.raild{stroke:#ddd;stroke-width:4;stroke-dasharray:26 24;stroke-linecap:butt}
.stn{fill:#7a80b5}
.bound{stroke:#a385a9;stroke-opacity:.65;stroke-width:9;stroke-dasharray:42 10 18 10;stroke-linecap:butt}
.track{stroke:#c9a36c;stroke-width:4;stroke-dasharray:14 10;stroke-linecap:butt}
.tiles{stroke:#e4e1dc;stroke-width:1;opacity:.5}
.shield{fill:#f2f2d0;stroke:#c0c08c;stroke-width:1.5}
.lb text{font-family:"Noto Sans",sans-serif;font-size:16px;font-weight:500;fill:#555;paint-order:stroke;stroke:#fff;stroke-opacity:.6;stroke-width:2.5px;stroke-linejoin:round}
.lb .big text{font-size:19.5px}
.lb .red text{font-style:italic;font-size:15px;fill:#b44452}
.lb .rd text{font-size:12.8px;fill:#6b4a3c;stroke:none}
.lb text.exp{font-size:12.8px;fill:#7c2038;stroke:none}
.lb text.dist{font-size:14.5px;fill:#9d7ea4}
.zoomctl{position:absolute;left:15px;top:15px;width:51px;height:96px;border:3px solid rgba(0,0,0,.22);border-radius:6px;background-clip:padding-box;display:flex;flex-direction:column}
.zoomctl a{flex:1;background:#fff;display:flex;align-items:center;justify-content:center;padding-top:1px}
.zoomctl a:first-child{border-bottom:1px solid #ccc;border-radius:3px 3px 0 0}
.zoomctl svg{width:18px;height:18px}
.attrib{position:absolute;right:0;bottom:0;width:211px;height:25px;background:rgba(255,255,255,.8);color:#333;font:16.5px/25px "Liberation Sans",sans-serif;text-align:right;padding-right:7px;white-space:nowrap}
.attrib a{color:#0078a8}
.taskbar{height:60px;display:flex;background:linear-gradient(90deg,#222 0,#22232a 26%,#1f2536 36%,#222538 54%,#352b29 57.5%,#3b3026 62%,#443a2d 71%,#40382f 74%,#202638 77.5%,#1e2537 90%,#1b2634 100%)}
.start{width:72px;display:flex;align-items:center;justify-content:center}
.start svg{width:24px;height:24px}
.search{width:432px;height:60px;border:2px solid #5f5f5f;background:#333;display:flex;align-items:center;padding-left:15px;font-size:21.2px;color:#dcdcdc;position:relative;white-space:nowrap}
.search span{margin-left:17px;margin-top:2px}
.mag{width:26px;height:26px;margin-top:-6px}
.art{width:119px;height:56px;position:absolute;right:-2px;bottom:-2px}
.apps{display:flex;padding-left:4px;width:856px}
.app{width:70.2px;height:60px;flex:none;display:flex;align-items:center;justify-content:center;position:relative}
.app>svg{width:36px;height:36px}
.run::after{content:"";position:absolute;bottom:0;left:8px;width:56px;height:3px;background:#76b9ed}
.exp2::after{background:linear-gradient(90deg,#76b9ed 43px,#4b7dab 43px)}
.active{width:68px;margin-left:1px;background:#6a655d}
.active::after{left:0;width:68px}
.badge{position:absolute;min-width:26px;height:26px;border:1.5px solid #9a9a9a;border-radius:14px;background:#343638;font:600 16.5px/23px "Open Sans",sans-serif;text-align:center;color:#fff}
.app .badge{left:40px;top:28px;width:29px}
.tray{display:flex;align-items:center;flex:1;padding-left:29px}
.weather{display:flex;align-items:center;gap:13px;width:130px;font-size:20px;letter-spacing:-.4px}
.weather svg{width:36px;height:34px;margin-top:-3px}
.t1{width:18px;height:10px}
.t2{width:16px;height:24px;margin-left:20px}
.t3{width:18px;height:24px;margin-left:18px}
.t4{width:24px;height:24px;margin-left:16px}
.t5{width:20px;height:20px;margin-left:15px}
.t6{width:24px;height:20px;margin-left:13px}
.clock{width:124px;display:flex;flex-direction:column;align-items:center;font-size:17.2px;line-height:28px;letter-spacing:0;padding-top:1px}
.notif{position:relative;width:68px;height:60px;padding:18px 0 0 13px}
.notif svg{width:24px;height:26px}
.notif .badge{left:24px;top:29px}
.show{width:2px;height:60px;background:#70757d}
```
